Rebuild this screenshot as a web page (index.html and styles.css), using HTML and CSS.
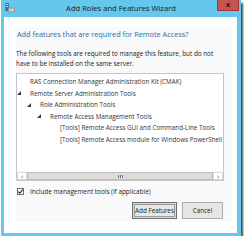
FILE: index.html
```html
<!DOCTYPE html>
<html lang="en">

<head>
    <meta charset="UTF-8">
    <title>Add Roles and Features Wizard</title>
    <link rel="stylesheet" href="styles.css">
</head>

<body>
    <div class="window">
        <div class="titlebar">
            <svg class="app-icon" viewBox="0 0 10 10" width="10" height="10">
                <rect x="0.5" y="0" width="3.5" height="8" fill="#2d6db5"/>
                <rect x="1.2" y="1" width="2" height="1" fill="#cfe3f7"/>
                <rect x="1.2" y="3" width="2" height="1" fill="#cfe3f7"/>
                <rect x="3" y="4.5" width="7" height="5" rx="1" fill="#8d969c"/>
                <rect x="4" y="5.5" width="5" height="3" rx="0.5" fill="#c9cfd3"/>
            </svg>
            <span class="title">Add Roles and Features Wizard</span>
            <button class="close">x</button>
        </div>

        <div class="client">
            <div class="panel">
                <h1 class="heading">Add features that are required for Remote Access?</h1>
                <p class="intro">The following tools are required to manage this feature, but do not<br>have to be installed on the same server.</p>

                <div class="tree">
                    <ul class="tree-items">
                        <li class="item"><span class="toggle"></span>RAS Connection Manager Administration Kit (CMAK)</li>
                        <li class="item"><span class="toggle open"></span>Remote Server Administration Tools</li>
                        <li class="item lvl1"><span class="toggle open"></span>Role Administration Tools</li>
                        <li class="item lvl2"><span class="toggle open"></span>Remote Access Management Tools</li>
                        <li class="item lvl3"><span class="toggle"></span>[Tools] Remote Access GUI and Command-Line Tools</li>
                        <li class="item lvl3"><span class="toggle"></span>[Tools] Remote Access module for Windows PowerShell</li>
                    </ul>
                    <div class="hscroll">
                        <span class="arrow">&lsaquo;</span>
                        <span class="thumb"><span class="grip"></span></span>
                        <span class="arrow">&rsaquo;</span>
                    </div>
                </div>

                <label class="include">
                    <span class="check">
                        <svg viewBox="0 0 7 7" width="7" height="7">
                            <path d="M1.3 3.6 L2.8 5.1 L5.8 1.6" fill="none" stroke="#222" stroke-width="1.1"/>
                        </svg>
                    </span>
                    Include management tools (if applicable)
                </label>

                <div class="actions">
                    <button class="btn default">Add Features</button>
                    <button class="btn">Cancel</button>
                </div>
            </div>
        </div>
    </div>
</body>

</html>
```

FILE: styles.css
```css
* {
    box-sizing: border-box;
}

body {
    margin: 0;
    font-family: "Open Sans", "Noto Sans", sans-serif;
    background: #fff;
    color: #222;
}

/* window frame */
.window {
    width: 240px;
    height: 236px;
    margin-left: 1px;
    background: #65c7eb;
    box-shadow: 2px 3px 2px rgba(40, 52, 58, 0.9);
    display: flex;
    flex-direction: column;
}

.titlebar {
    height: 17px;
    display: grid;
    grid-template-columns: 1fr auto 1fr;
    align-items: start;
}

.app-icon {
    margin: 3px 0 0 4px;
}

.title {
    font-size: 7.6px;
    line-height: 17px;
    color: #1b1b1b;
}

.close {
    justify-self: end;
    margin-right: 2px;
    width: 22px;
    height: 11px;
    padding: 0;
    background: #c75450;
    border: 1px solid #9f3a36;
    border-top: none;
    color: #1a1a1a;
    font: bold 7px/9px "DejaVu Sans", sans-serif;
}

.client {
    flex: 1;
    margin: 0 4px 3px 3px;
    background: #fff;
    padding: 10px 5px 11px 12px;
}

.panel {
    height: 100%;
    background: #f9f9f9;
    padding-right: 8px;
    display: flex;
    flex-direction: column;
}

.heading {
    margin: 0;
    padding: 2px 0 0 1px;
    font-size: 7.3px;
    line-height: 10px;
    font-weight: normal;
    color: #2a6cb0;
    white-space: nowrap;
}

.intro {
    margin: 10px 0 0;
    font-size: 6.35px;
    line-height: 10px;
    white-space: nowrap;
}

/* tree view */
.tree {
    margin-top: 4px;
    height: 108px;
    border: 1px solid #c6c6c6;
    background: #fff;
    display: flex;
    flex-direction: column;
}

.tree-items {
    flex: 1;
    margin: 0;
    padding: 2px 0 0;
    list-style: none;
    overflow: hidden;
}

.item {
    display: flex;
    align-items: center;
    height: 11.5px;
    font-size: 6.3px;
    white-space: nowrap;
    color: #333;
}

.item.lvl1 {
    padding-left: 10px;
}

.item.lvl2 {
    padding-left: 20px;
}

.item.lvl3 {
    padding-left: 30px;
}

.toggle {
    flex: none;
    width: 13px;
    height: 4px;
}

.toggle.open {
    width: 0;
    height: 0;
    margin-right: 9px;
    border-left: 4px solid transparent;
    border-bottom: 4px solid #3a3a3a;
}

.hscroll {
    height: 8px;
    display: flex;
    background: #f0f0f0;
}

.arrow {
    width: 10px;
    font-size: 7px;
    line-height: 7px;
    text-align: center;
    color: #555;
    background: #fff;
    border: 1px solid #dadada;
}

.thumb {
    flex: 1;
    display: flex;
    align-items: center;
    justify-content: center;
    background: #dcdcdc;
    border: 1px solid #bdbdbd;
}

.grip {
    width: 5px;
    height: 3px;
    background: repeating-linear-gradient(90deg, #777 0 1px, transparent 1px 2px);
}

/* checkbox */
.include {
    margin-top: 7px;
    display: flex;
    align-items: center;
    gap: 6px;
    padding-left: 1px;
    height: 7px;
    font-size: 6.4px;
}

.check {
    width: 7px;
    height: 7px;
    border: 1px solid #707070;
    background: #fff;
    display: flex;
}

.check svg {
    margin: -1px;
}

/* buttons */
.actions {
    margin-top: 7px;
    display: flex;
    justify-content: flex-end;
    gap: 5px;
    padding-right: 1px;
}

.btn {
    height: 17px;
    padding: 0;
    background: #e6e6e6;
    border: 1px solid #acacac;
    font-family: "Open Sans", "Noto Sans", sans-serif;
    font-size: 6.3px;
    color: #222;
}

.btn.default {
    width: 45px;
    border-color: #6e6e6e;
    box-shadow: inset 0 0 0 1px #d8d8d8, inset 0 0 0 2px #9a9a9a;
}

.btn:last-child {
    width: 41px;
}
```
